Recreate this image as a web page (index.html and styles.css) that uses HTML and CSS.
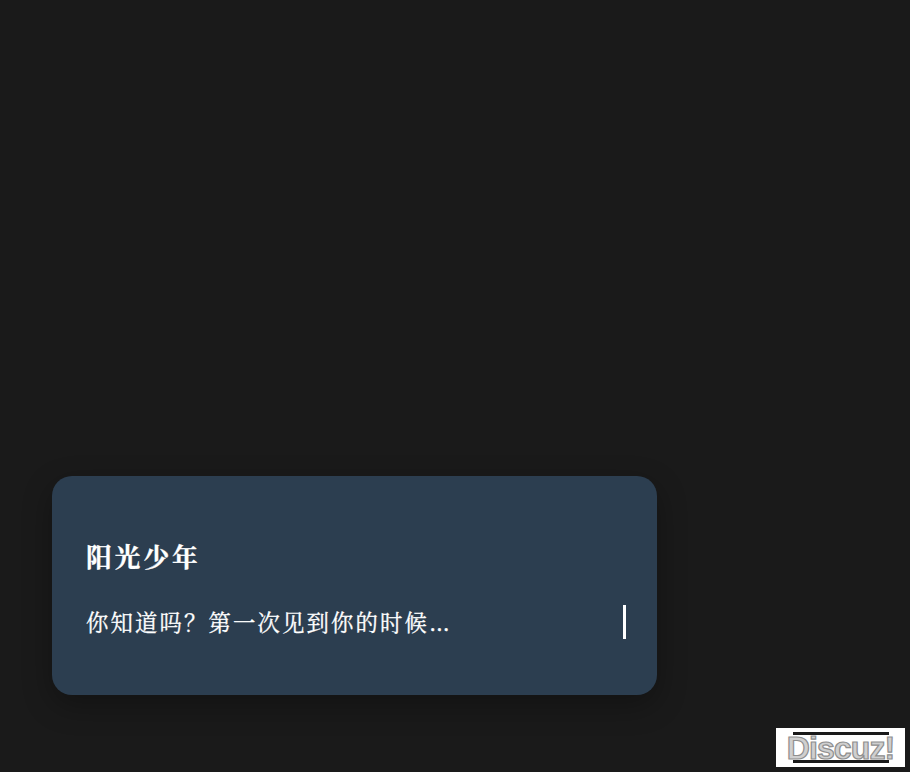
FILE: index.html
```html
<!DOCTYPE html>
<html lang="zh">
<head>
  <meta charset="utf-8">
  <title>阳光少年</title>
  <link rel="stylesheet" href="styles.css">
</head>
<body>
  <div class="scene">
    <div class="dialog-box">
      <h3 class="speaker">阳光少年</h3>
      <div class="line">
        <p class="line-text">你知道吗？第一次见到你的时候<span class="ellipsis">...</span></p>
        <span class="cursor"></span>
      </div>
    </div>
  </div>

  <!-- Forum watermark -->
  <div class="watermark">
    <div class="watermark-bar">
      <span class="watermark-text">Discuz!</span>
    </div>
  </div>
</body>
</html>
```

FILE: styles.css
```css
html, body {
  margin: 0;
  height: 100%;
}
body {
  background-color: #1a1a1a;
  font-family: "Noto Serif CJK SC", "Noto Sans CJK SC", serif;
  overflow: hidden;
}
.scene {
  height: 772px;
  box-sizing: border-box;
  padding: 0 0 77px 52px;
  display: flex;
  align-items: flex-end;
}
.dialog-box {
  width: 605px;
  height: 219px;
  box-sizing: border-box;
  padding: 60px 31px 0 34px;
  background-color: #2c3e50;
  border-radius: 20px;
  box-shadow: 0 10px 30px rgba(0, 0, 0, 0.3);
  color: #fff;
}
.speaker {
  margin: 0;
  font-size: 25.6px;
  line-height: 40px;
  letter-spacing: 3.1px;
  font-weight: bold;
  -webkit-text-stroke: 0.3px #fff;
}
.line {
  margin-top: 28px;
  display: flex;
  justify-content: space-between;
  align-items: center;
}
.line-text {
  margin: 0;
  padding-bottom: 2px;
  font-size: 22.4px;
  line-height: 34px;
  letter-spacing: 2.1px;
  -webkit-text-stroke: 0.3px #fff;
}
.ellipsis {
  letter-spacing: -0.5px;
}
.cursor {
  width: 3px;
  height: 34px;
  background-color: #fff;
}
.watermark {
  position: absolute;
  left: 776px;
  top: 728px;
  width: 129px;
  height: 39px;
  background-color: #fff;
  display: flex;
  justify-content: center;
  align-items: flex-start;
}
.watermark-bar {
  margin-top: 4px;
  width: 96px;
  height: 25px;
  border-top: 3px solid #1a1a1a;
  border-bottom: 3px solid #1a1a1a;
  display: flex;
  justify-content: center;
  align-items: center;
}
.watermark-text {
  font-family: "Liberation Sans", Arial, sans-serif;
  font-size: 32px;
  line-height: 24px;
  font-weight: bold;
  letter-spacing: -0.9px;
  color: #cfcfcf;
  -webkit-text-stroke: 1.2px #8f8f8f;
}
```
